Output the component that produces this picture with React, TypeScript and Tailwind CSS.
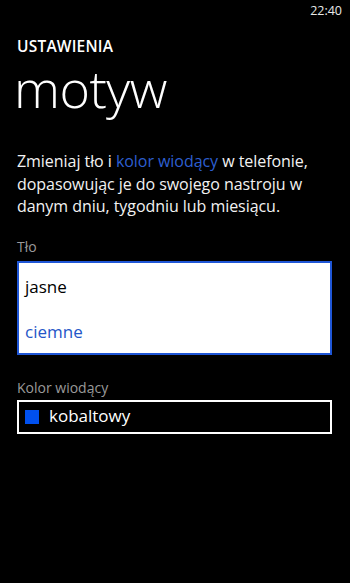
export default function App() {
  const font = { fontFamily: '"Open Sans", "Noto Sans", sans-serif' };
  return (
    <div
      className="w-[350px] h-[583px] bg-black text-white overflow-hidden relative"
      style={font}
    >
      {/* status bar */}
      <div className="flex justify-end pr-[8px] pt-[3px] h-[20px]">
        <span className="text-[12.5px] leading-[16px] text-[#e8e8e8]">22:40</span>
      </div>

      <div className="px-[17px]">
        <h2 className="mt-[16px] text-[15.5px] leading-[20px] font-semibold tracking-[0.2px]">
          USTAWIENIA
        </h2>
        <h1 className="mt-[4px] ml-[-3px] text-[52px] leading-[56px] font-light tracking-[-0.5px]">
          motyw
        </h1>

        <p className="mt-[34px] text-[16px] leading-[22.5px] text-[#f2f2f2] tracking-[-0.05px]">
          Zmieniaj tło i <span className="text-[#2d5fd0]">kolor wiodący</span> w telefonie,
          dopasowując je do swojego nastroju w danym dniu, tygodniu lub miesiącu.
        </p>

        <div className="mt-[20px] text-[14px] leading-[18px] text-[#9a9a9a]">Tło</div>
        <div className="mt-[5px] w-[315px] border-2 border-[#1f56d6] bg-white pl-[6px] pt-[12px] pb-[9px]">
          <div className="text-[17px] leading-[24px] text-black">jasne</div>
          <div className="mt-[21px] text-[17px] leading-[24px] text-[#2456c8]">ciemne</div>
        </div>

        <div className="mt-[24px] text-[14px] leading-[18px] text-[#9a9a9a]">Kolor wiodący</div>
        <div className="mt-[3px] w-[315px] h-[34px] border-2 border-white flex items-center pl-[6px] gap-[10px]">
          <span className="w-[14px] h-[14px] bg-[#0050ef]" />
          <span className="text-[17px] leading-[22px] mt-[-2px]">kobaltowy</span>
        </div>
      </div>
    </div>
  );
}
